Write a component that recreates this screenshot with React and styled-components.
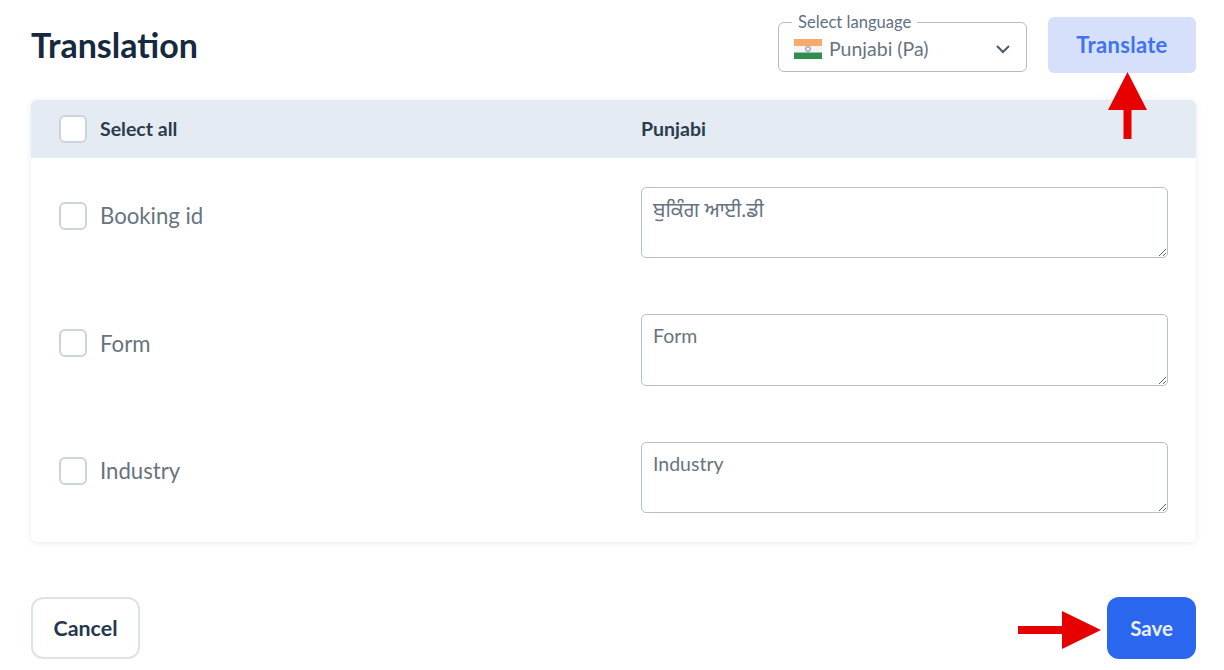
import React from 'react'
import styled, { createGlobalStyle } from 'styled-components'

const GlobalStyle = createGlobalStyle`
  html, body {
    margin: 0;
    padding: 0;
    background: #fff;
    font-family: Lato, "Noto Sans", sans-serif;
  }
  * {
    box-sizing: border-box;
  }
`

const Page = styled.div`
  position: relative;
  width: 1224px;
  height: 670px;
  overflow: hidden;
  padding: 17px 28px 0 31px;
`

const Header = styled.div`
  display: flex;
  align-items: center;
  height: 56px;
  margin-bottom: 27px;
`

const Title = styled.h1`
  flex: 1;
  margin: -2px 0 0 0;
  font-size: 34px;
  font-weight: 700;
  color: #15293f;
`

const SelectBox = styled.div`
  position: relative;
  display: flex;
  align-items: center;
  width: 249px;
  height: 50px;
  margin: 4px 21px 0 0;
  padding: 3px 15px 0 15px;
  border: 1px solid #b4bcc3;
  border-radius: 6px;
`

const SelectLabel = styled.span`
  position: absolute;
  top: -10px;
  left: 13px;
  padding: 0 6px;
  background: #fff;
  font-size: 16.6px;
  line-height: 18px;
  color: #5f7183;
`

const SelectValue = styled.span`
  flex: 1;
  margin-left: 7px;
  font-size: 19.5px;
  color: #68747f;
`

const TranslateButton = styled.button`
  width: 148px;
  height: 56px;
  padding: 0 0 2px;
  border: none;
  border-radius: 6px;
  background: #d6e0fb;
  font-family: inherit;
  font-size: 22px;
  font-weight: 700;
  letter-spacing: 0.3px;
  color: #3f74ee;
`

const Card = styled.div`
  height: 442px;
  border-radius: 6px;
  background: #fff;
  box-shadow: 0 1px 6px rgba(30, 50, 70, 0.1);
`

const Head = styled.div`
  display: grid;
  grid-template-columns: 582px 1fr;
  align-items: center;
  height: 58px;
  padding-left: 28px;
  border-radius: 6px 6px 0 0;
  background: #e4ebf2;
`

const Rows = styled.div`
  display: flex;
  flex-direction: column;
  gap: 56px;
  padding: 28.7px 28px;
`

const Row = styled.div`
  display: grid;
  grid-template-columns: 582px 1fr;
`

const Check = styled.label`
  display: flex;
  align-items: center;
  gap: 13px;
  height: ${p => (p.$head ? 'auto' : '58px')};
`

const Box = styled.span`
  width: 28px;
  height: 28px;
  border: 2px solid #ccd4dc;
  border-radius: 6px;
  background: #fff;
`

const HeadText = styled.span`
  margin-bottom: 2px;
  font-size: 19.5px;
  font-weight: 700;
  color: #2b3c4e;
`

const RowText = styled.span`
  font-size: 22.2px;
  color: #67747f;
`

const Field = styled.textarea`
  display: block;
  width: 527px;
  height: 71.5px;
  padding: 10px 11px;
  border: 1px solid #b9c1c8;
  border-radius: 5px;
  outline: none;
  font-family: Lato, "Noto Sans Gurmukhi", "Noto Sans", sans-serif;
  font-size: ${p => (p.$translated ? '20.6px' : '19.5px')};
  line-height: 22px;
  color: #67747f;
`

const Footer = styled.div`
  display: flex;
  justify-content: space-between;
  margin-top: 55px;
`

const CancelButton = styled.button`
  width: 109px;
  height: 62px;
  border: 2px solid #dde3e9;
  border-radius: 12px;
  background: #fff;
  font-family: inherit;
  font-size: 21.4px;
  font-weight: 700;
  color: #24374c;
`

const SaveButton = styled.button`
  width: 89px;
  height: 62px;
  border: none;
  border-radius: 12px;
  background: #2b66ee;
  font-family: inherit;
  font-size: 20.5px;
  font-weight: 700;
  color: #e9effd;
`

const Arrow = styled.svg`
  position: absolute;
  top: ${p => p.$top}px;
  left: ${p => p.$left}px;
`

const Flag = () => (
  <svg width="28" height="20" viewBox="0 0 28 20">
    <rect width="28" height="7" fill="#f6ab6c" />
    <rect y="7" width="28" height="6.5" fill="#f4f4f4" />
    <rect y="13.5" width="28" height="6.5" fill="#2f8f4e" />
    <circle cx="14" cy="10" r="2.4" fill="none" stroke="#6c7fae" strokeWidth="1" />
  </svg>
)

const Chevron = () => (
  <svg width="16" height="10" viewBox="0 0 16 10" fill="none">
    <path d="M2 2l6 6 6-6" stroke="#4c5a66" strokeWidth="2" />
  </svg>
)

const rows = [
  { label: 'Booking id', value: 'ਬੁਕਿੰਗ ਆਈ.ਡੀ', translated: true },
  { label: 'Form', value: 'Form' },
  { label: 'Industry', value: 'Industry' },
]

export default function App() {
  return (
    <Page>
      <GlobalStyle />
      <Header>
        <Title>Translation</Title>
        <SelectBox>
          <SelectLabel>Select language</SelectLabel>
          <Flag />
          <SelectValue>Punjabi (Pa)</SelectValue>
          <Chevron />
        </SelectBox>
        <TranslateButton>Translate</TranslateButton>
      </Header>
      <Card>
        <Head>
          <Check $head>
            <Box />
            <HeadText>Select all</HeadText>
          </Check>
          <HeadText>Punjabi</HeadText>
        </Head>
        <Rows>
          {rows.map(row => (
            <Row key={row.label}>
              <Check>
                <Box />
                <RowText>{row.label}</RowText>
              </Check>
              <Field defaultValue={row.value} $translated={row.translated} />
            </Row>
          ))}
        </Rows>
      </Card>
      <Footer>
        <CancelButton>Cancel</CancelButton>
        <SaveButton>Save</SaveButton>
      </Footer>
      <Arrow $top={71} $left={1107} width="41" height="69" viewBox="0 0 41 69">
        <path d="M20.5 1L40 39H24.5V68H16.5V39H1z" fill="#e60000" />
      </Arrow>
      <Arrow $top={610} $left={1017} width="85" height="40" viewBox="0 0 85 40">
        <path d="M84 20L45 1V16H1V24H45V39z" fill="#e60000" />
      </Arrow>
    </Page>
  )
}
